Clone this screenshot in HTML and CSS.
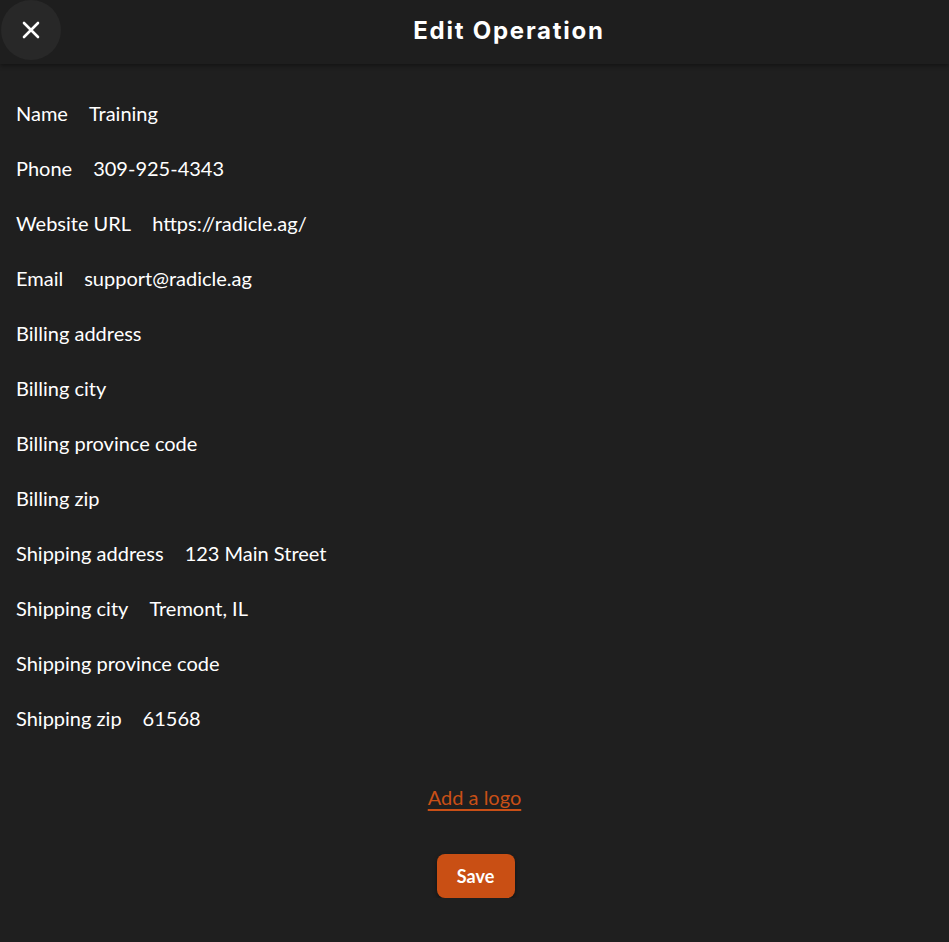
FILE: index.html
```html
<!DOCTYPE html>
<html lang="en">
<head>
  <meta charset="UTF-8">
  <meta name="viewport" content="width=device-width, initial-scale=1.0">
  <title>Edit Operation</title>
  <link rel="stylesheet" href="styles.css">
</head>
<body>
  <header class="topbar">
    <button class="close-btn" aria-label="Close">
      <svg width="20" height="20" viewBox="0 0 20 20">
        <path d="M3 3 L17 17 M17 3 L3 17" stroke="#fff" stroke-width="2.6" stroke-linecap="round"/>
      </svg>
    </button>
    <h1 class="title">Edit Operation</h1>
  </header>

  <main class="content">
    <!-- Campos da operação -->
    <div class="field"><span class="label">Name</span><span class="value">Training</span></div>
    <div class="field"><span class="label">Phone</span><span class="value">309-925-4343</span></div>
    <div class="field"><span class="label">Website URL</span><span class="value">https://radicle.ag/</span></div>
    <div class="field"><span class="label">Email</span><span class="value">support@radicle.ag</span></div>
    <div class="field"><span class="label">Billing address</span></div>
    <div class="field"><span class="label">Billing city</span></div>
    <div class="field"><span class="label">Billing province code</span></div>
    <div class="field"><span class="label">Billing zip</span></div>
    <div class="field"><span class="label">Shipping address</span><span class="value">123 Main Street</span></div>
    <div class="field"><span class="label">Shipping city</span><span class="value">Tremont, IL</span></div>
    <div class="field"><span class="label">Shipping province code</span></div>
    <div class="field"><span class="label">Shipping zip</span><span class="value">61568</span></div>

    <div class="actions">
      <a href="#" class="logo-link">Add a logo</a>
      <button class="save-btn">Save</button>
    </div>
  </main>
</body>
</html>
```

FILE: styles.css
```css
/* Layout geral escuro */
html, body {
  margin: 0;
  background-color: #1f1f1f;
  color: #fff;
  font-family: Lato, "Open Sans", sans-serif;
}
.topbar {
  height: 64px;
  background-color: #1e1e1e;
  box-shadow: 0 2px 4px rgba(0,0,0,0.35);
  display: flex;
  align-items: flex-start;
}
.close-btn {
  flex: none;
  margin-left: 1px;
  width: 60px;
  height: 60px;
  border-radius: 50%;
  border: none;
  background-color: #282828;
  display: flex;
  align-items: center;
  justify-content: center;
  cursor: pointer;
  padding: 0;
}
.title {
  flex: 1;
  margin: 0;
  padding-left: 8px;
  line-height: 62px;
  text-align: center;
  font-family: Inter, "DejaVu Sans", sans-serif;
  font-weight: 700;
  font-size: 24px;
  letter-spacing: 1.75px;
}
.content {
  padding: 36px 16px 0;
}
.field {
  height: 55px;
  display: flex;
  gap: 21px;
  font-size: 20px;
  line-height: 26px;
}
.actions {
  display: flex;
  flex-direction: column;
  align-items: center;
  margin-top: 25px;
}
.logo-link {
  color: #c94f16;
  font-size: 20px;
  text-decoration: underline;
  text-underline-offset: 4px;
}
.save-btn {
  margin-top: 45px;
  margin-left: 2px;
  width: 78px;
  height: 44px;
  background-color: #c94f14;
  color: #fff;
  border: none;
  border-radius: 8px;
  font-family: Lato, sans-serif;
  font-weight: 700;
  font-size: 18px;
  box-shadow: 0 2px 4px rgba(0,0,0,0.4);
  cursor: pointer;
}
```
